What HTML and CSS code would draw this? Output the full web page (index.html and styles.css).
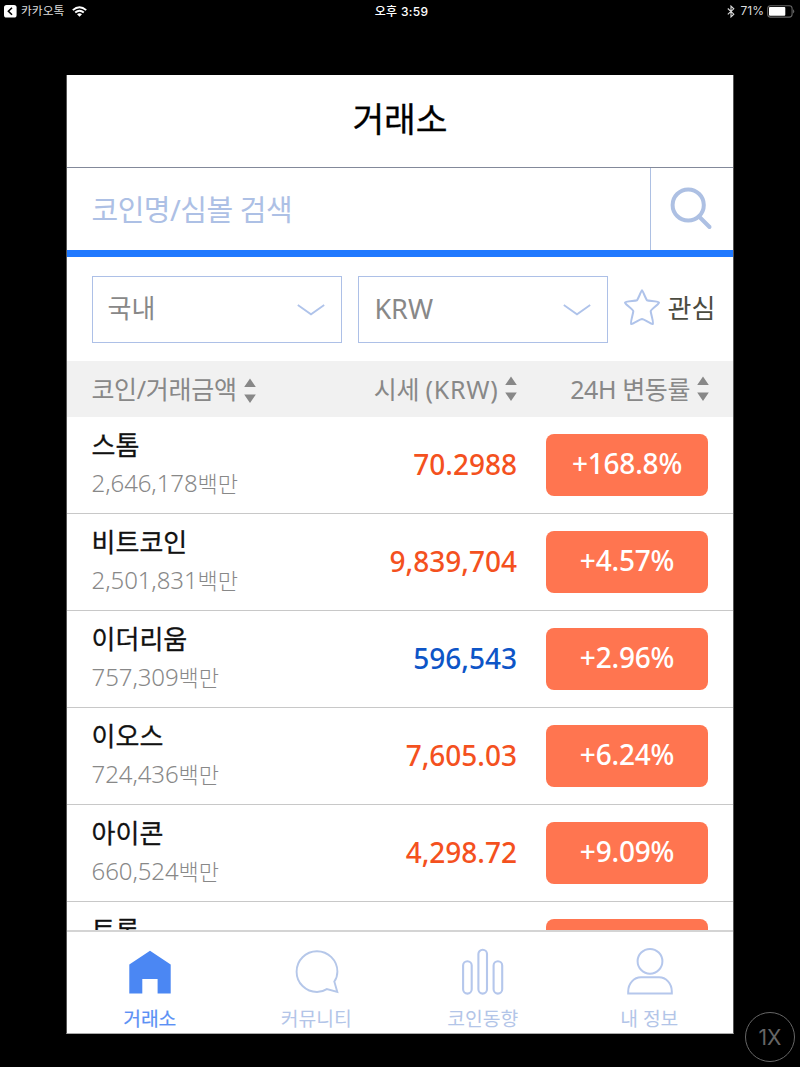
FILE: index.html
```html
<!DOCTYPE html>
<html lang="ko">
<head>
<meta charset="utf-8">
<title>거래소</title>
<link rel="stylesheet" href="styles.css">
</head>
<body>
<div class="status">
  <div class="status-left">
    <svg width="13" height="13" viewBox="0 0 13 13"><rect width="12.6" height="12.6" rx="2.6" fill="#fff"/><path d="M8 2.8 4.4 6.3 8 9.8" fill="none" stroke="#000" stroke-width="1.6"/></svg>
    <span class="back">카카오톡</span>
    <svg class="wifi" width="15" height="11" viewBox="0 0 15 11"><g fill="none" stroke="#fff" stroke-width="1.9"><path d="M.8 4.1Q7.5-1.8 14.2 4.1"/><path d="M3.2 6.5Q7.5 2.8 11.8 6.5"/></g><path d="M5 8.2Q7.5 6.3 10 8.2L7.5 10.7Z" fill="#fff"/></svg>
  </div>
  <div class="clock">오후 3:59</div>
  <div class="status-right">
    <svg width="8" height="13" viewBox="0 0 8 13"><path d="M.8 3.5 6.8 9.2 4 11.9V1.1L6.8 3.8.8 9.4" fill="none" stroke="#ddd" stroke-width="1.1"/></svg>
    <span class="pct">71%</span>
    <svg width="28" height="13" viewBox="0 0 28 13"><rect x=".7" y=".7" width="24.4" height="11.4" rx="2.8" fill="none" stroke="#666" stroke-width="1.1"/><rect x="2" y="2" width="16.3" height="8.8" rx="1" fill="#fff"/><path d="M26.2 4.3q2.1 2.1 0 4.2z" fill="#777"/></svg>
  </div>
</div>

<main class="app">
  <h1 class="title">거래소</h1>
  <div class="search">
    <div class="search-field">코인명/심볼 검색</div>
    <div class="search-button"><svg width="46" height="46" viewBox="0 0 46 46"><g fill="none" stroke="#adc0e3" stroke-width="4" stroke-linecap="round"><circle cx="20.2" cy="20" r="15.6" transform="translate(1 1)"/><path d="M32 32.5 42.5 43"/></g></svg></div>
  </div>
  <div class="filters">
    <div class="select"><span class="select-ko">국내</span><svg width="28" height="12" viewBox="0 0 28 12"><path d="M.8 1.1 14 10.3 27.2 1.1" fill="none" stroke="#afc3ea" stroke-width="1.8"/></svg></div>
    <div class="select"><span class="select-en">KRW</span><svg width="28" height="12" viewBox="0 0 28 12"><path d="M.8 1.1 14 10.3 27.2 1.1" fill="none" stroke="#afc3ea" stroke-width="1.8"/></svg></div>
    <div class="favorite"><svg width="36" height="36" viewBox="0 0 36 36"><path d="M18 1.3C18.7 1.3 21.3 9 22.9 11.2 25.2 12 35 12.2 35 13.6 34.3 15.8 27.6 20 26.7 22.1 26.8 25 30 34 28.8 35 26.8 35.4 20.4 30.2 18 30 15.6 30.2 9.2 35.4 7.2 35 6 34 9.2 25 9.3 22.1 8.4 20 1.7 15.8 1 13.6 1 12.2 10.8 12 13.1 11.2 14.7 9 17.3 1.3 18 1.3Z" fill="none" stroke="#afc3ea" stroke-width="2" stroke-linejoin="round"/></svg><span class="fav-text">관심</span></div>
  </div>
  <div class="columns">
    <div class="col col-name"><span class="col-t1">코인/거래금액</span><svg width="12" height="26" viewBox="0 0 12 26"><path d="M6 .5 11.8 9H.2ZM.2 16.5H11.8L6 25Z" fill="#888"/></svg></div>
    <div class="col col-price"><span class="col-t2">시세 <span class="currency">(KRW)</span></span><svg width="12" height="26" viewBox="0 0 12 26"><path d="M6 .5 11.8 9H.2ZM.2 16.5H11.8L6 25Z" fill="#888"/></svg></div>
    <div class="col col-change"><span class="col-t3">24H 변동률</span><svg width="12" height="26" viewBox="0 0 12 26"><path d="M6 .5 11.8 9H.2ZM.2 16.5H11.8L6 25Z" fill="#888"/></svg></div>
  </div>
  <div class="list">
    <div class="row"><div class="coin"><div class="name">스톰</div><div class="amount">2,646,178<span class="unit">백만</span></div></div><div class="price">70.2988</div><div class="badge">+168.8%</div></div>
    <div class="row"><div class="coin"><div class="name">비트코인</div><div class="amount">2,501,831<span class="unit">백만</span></div></div><div class="price">9,839,704</div><div class="badge">+4.57%</div></div>
    <div class="row"><div class="coin"><div class="name">이더리움</div><div class="amount">757,309<span class="unit">백만</span></div></div><div class="price down">596,543</div><div class="badge">+2.96%</div></div>
    <div class="row"><div class="coin"><div class="name">이오스</div><div class="amount">724,436<span class="unit">백만</span></div></div><div class="price">7,605.03</div><div class="badge">+6.24%</div></div>
    <div class="row"><div class="coin"><div class="name">아이콘</div><div class="amount">660,524<span class="unit">백만</span></div></div><div class="price">4,298.72</div><div class="badge">+9.09%</div></div>
    <div class="row"><div class="coin"><div class="name">트론</div></div><div class="price"></div><div class="badge"></div></div>
  </div>
  <nav class="tabs">
    <div class="tab active"><svg width="48" height="50" viewBox="0 0 48 50"><path d="M24 3.8 44.7 17.5V46.5H31.6V32H16.3V46.5H3.3V17.5Z" fill="#4b87f3"/></svg><span class="tab-label">거래소</span></div>
    <div class="tab"><svg width="48" height="50" viewBox="0 0 48 50"><path d="M41.3 34.5C43.5 31.5 44.4 28 44.4 24.5A20.4 20.4 0 1 0 24 45C27.7 45 31 43.9 33.8 42.1L44.3 45Z" fill="none" stroke="#b5c7e9" stroke-width="1.9"/></svg><span class="tab-label">커뮤니티</span></div>
    <div class="tab"><svg width="48" height="50" viewBox="0 0 48 50"><g fill="none" stroke="#b5c7ec" stroke-width="2.1"><rect x="4.1" y="14.2" width="8.6" height="32.4" rx="4.3"/><rect x="19.4" y="2.7" width="8.6" height="43.9" rx="4.3"/><rect x="34.6" y="14.2" width="8.6" height="32.4" rx="4.3"/></g></svg><span class="tab-label">코인동향</span></div>
    <div class="tab"><svg width="48" height="50" viewBox="0 0 48 50"><g fill="none" stroke="#b5c7ec" stroke-width="2"><circle cx="24" cy="14.3" r="12.4"/><path d="M2.2 46.5V44.5C2.2 36.5 8 30.3 15 30.3H33C40 30.3 45.8 36.5 45.8 44.5V46.5Z"/></g></svg><span class="tab-label">내 정보</span></div>
  </nav>
</main>
<div class="scale">1X</div>
</body>
</html>
```

FILE: styles.css
```css
* { box-sizing: border-box; }
body {
  margin: 0;
  width: 800px;
  height: 1067px;
  overflow: hidden;
  background: #000;
  font-family: "Noto Sans", "Noto Sans CJK KR", sans-serif;
}
svg { display: block; flex: none; }
span { white-space: nowrap; }

.status {
  display: grid;
  grid-template-columns: 1fr auto 1fr;
  height: 22px;
  align-items: center;
  padding: 0 5px 0 4px;
  color: #fff;
  font: 12px/20px "Inter", "Noto Sans CJK KR", sans-serif;
}
.status-left, .status-right { display: flex; align-items: center; }
.status-right { justify-content: flex-end; }
.back { margin-left: 4px; color: #ddd; font-size: 11.8px; }
.wifi { margin-left: 8px; }
.clock { padding: 1px 0 0 4px; font-weight: 500; letter-spacing: 0.3px; }
.pct { margin: 0 3px 0 6px; color: #ddd; }

.app {
  display: flex;
  flex-direction: column;
  width: 668px;
  height: 959px;
  margin: 53px 0 0 66px;
  background: #fff;
  border: 1px solid #555;
  border-top: 0;
  border-bottom-color: #aaa;
}
.title {
  margin: 0;
  height: 93px;
  flex: none;
  text-align: center;
  font-size: 34.5px;
  font-weight: 400;
  line-height: 88px;
  -webkit-text-stroke: 0.3px #000;
  border-bottom: 1px solid #83899a;
}
.search {
  display: flex;
  flex: none;
  height: 89px;
  border-bottom: 7px solid #2079ff;
}
.search-field {
  flex: 1;
  padding-left: 24.5px;
  font-size: 29px;
  letter-spacing: -0.5px;
  line-height: 83px;
  color: #adc0e5;
  border-right: 1px solid #adc0e3;
}
.search-button { width: 82px; padding: 16px 0 0 16px; }

.filters {
  display: flex;
  flex: none;
  height: 104px;
  padding: 19px 0 0 24.6px;
}
.select {
  display: flex;
  justify-content: space-between;
  width: 250px;
  height: 67px;
  margin-right: 16.8px;
  padding: 0 16px 0 15px;
  border: 1.5px solid #adc0e7;
  font-size: 26px;
  line-height: 63px;
  color: #888;
}
.select svg { margin-top: 27px; }
.select-en { font-size: 27px; }
.favorite { display: flex; margin-left: -1.6px; }
.favorite svg { margin-top: 13px; }
.fav-text { margin-left: 8px; font-size: 26px; line-height: 64px; color: #4b4b3f; }

.columns {
  display: grid;
  grid-template-columns: 225px 201px auto;
  flex: none;
  height: 56px;
  padding-left: 24.4px;
  background: #f1f1f1;
  color: #888;
  font-size: 25px;
  line-height: 55px;
}
.col { display: flex; align-items: center; }
.col-t1 { letter-spacing: -0.3px; }
.col-t2 { letter-spacing: -0.2px; }
.currency { letter-spacing: 0.7px; }
.col-t3 { letter-spacing: -0.4px; }
.col svg { margin: 3px 0 0 7px; }
.col-price, .col-change { justify-content: flex-end; white-space: nowrap; }
.col-change { padding-right: 24px; }
.col-price svg, .col-change svg { margin-top: 0; }

.list { flex: 1; min-height: 0; overflow: hidden; }
.row {
  display: grid;
  grid-template-columns: 225px 200px 163px;
  height: 97px;
  padding-left: 25px;
  border-bottom: 1px solid #c8c8c8;
}
.coin { margin-left: -0.4px; padding-top: 11px; }
.name { font-size: 26px; line-height: 35px; color: #111; -webkit-text-stroke: 0.3px #111; }
.amount { margin-top: 2px; font-size: 24px; font-weight: 300; letter-spacing: -0.1px; line-height: 36px; color: #888; }
.unit { font-size: 22px; }
.price {
  text-align: right;
  font-size: 28px;
  font-weight: 500;
  line-height: 94px;
  color: #f4511e;
}
.down { color: #0d55c7; }
.badge {
  height: 62px;
  margin: 17px 0 0 29px;
  width: 162px;
  border-radius: 8px;
  background: #ff7550;
  color: #fff;
  text-align: center;
  font-size: 28px;
  font-weight: 500;
  letter-spacing: -0.2px;
  line-height: 59px;
}
.tabs {
  display: grid;
  grid-template-columns: repeat(4, 1fr);
  flex: none;
  height: 103px;
  border-top: 2px solid #d4d4d4;
}
.tab {
  display: flex;
  flex-direction: column;
  align-items: center;
  padding-top: 15px;
  color: #b3c5e8;
  font-size: 19.3px;
  line-height: 28px;
}
.tab-label { margin: 8px 1px 0 0; }
.active { color: #5b91f5; -webkit-text-stroke: 0.2px #5b91f5; }

.scale {
  position: absolute;
  left: 745px;
  top: 1012px;
  width: 50px;
  height: 50px;
  border: 1.5px solid #666;
  border-radius: 50%;
  text-align: center;
  font: 21px/49px "Inter", sans-serif;
  color: #666;
}
```
